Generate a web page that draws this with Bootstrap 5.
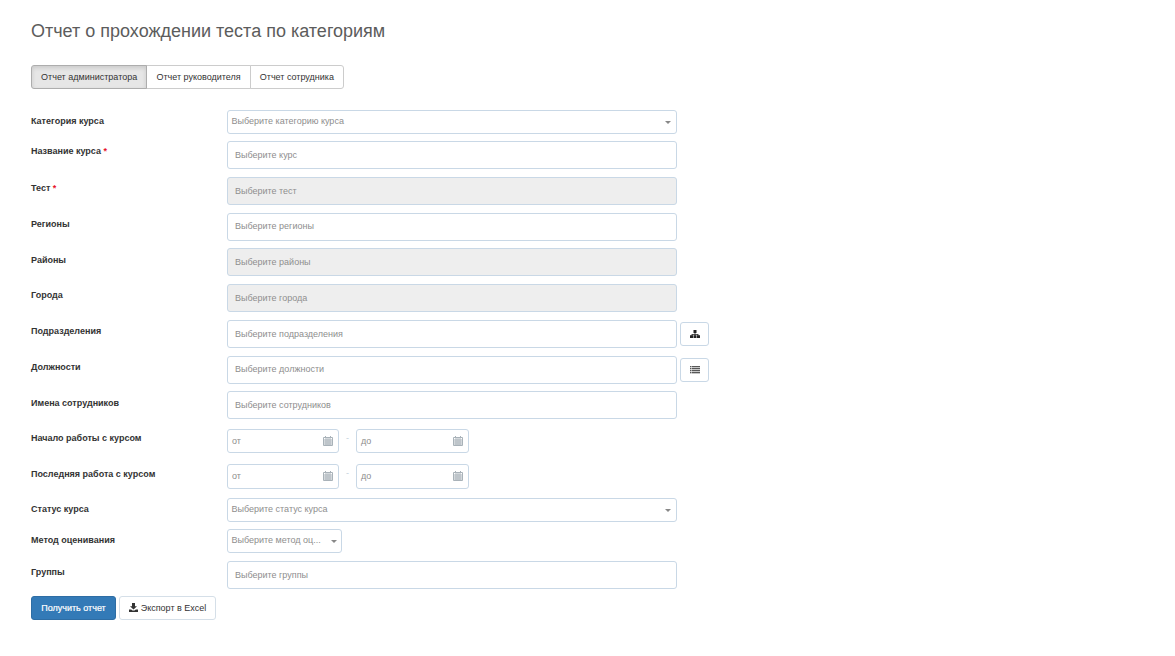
<!DOCTYPE html>
<html lang="ru"><head><meta charset="utf-8"><title>Отчет</title>
<link href="https://cdn.jsdelivr.net/npm/bootstrap@5.3.0/dist/css/bootstrap.min.css" rel="stylesheet">
<style>
body{font-family:"Liberation Sans",Arial,sans-serif;font-size:9px;color:#333;background:#fff;}
.page-wrap{padding:21px 31px 0;}
.page-title{font-size:18px;font-weight:400;line-height:20px;color:#5c5c5c;margin:0 0 24px;}
.tab-group .btn{font-size:9px;line-height:14px;padding:4px 9.100px;height:24px;border:1px solid #ccc;color:#333;background:#fff;border-radius:3px;}
.tab-group .btn.active{background:#e6e6e6;border-color:#adadad;box-shadow:inset 0 2px 4px rgba(0,0,0,.125);color:#333;}
.form-area{margin-top:21px;}
.frow{display:flex;align-items:flex-start;margin-bottom:7.75px;}
.frow.after-sel{margin-bottom:7px;}
.frow.after-names{margin-bottom:9.750px;}
.frow.after-d1{margin-bottom:10.750px;}
.frow.after-d2{margin-bottom:9.500px;}
.frow.after-last{margin-bottom:7px;}
.flabel{width:196px;font-weight:700;font-size:9px;line-height:14px;padding-top:3.500px;color:#333;flex:none;}
.flabel.low{padding-top:4.500px;}
.flabel.high{padding-top:2.500px;}
.flabel.d1{padding-top:1.500px;}
.flabel.d2{padding-top:2.500px;}
.req{color:#e7132a;}
.ctrl{width:450px;height:28px;border:1px solid #c9d8e6;border-radius:3px;background:#fff;font-size:9px;color:#8e8e8e;padding:1px 7px 0;display:flex;align-items:center;}
.ctrl.off{background:#eee;}
.sel{height:24px;padding:0 3.500px;justify-content:space-between;}
.sel::after{content:"";border-style:solid;border-width:3px 3px 0;border-color:#888 transparent transparent;margin-right:1.500px;flex:none;}
.sel-sm{width:115px;}
.sel-sm::after{margin-right:.5px;}
.sel-sm span{white-space:nowrap;}
.side-btn{width:29px;height:24px;margin:2.500px 0 0 3px;border:1px solid #c9d8e6;border-radius:3px;background:#fff;display:flex;align-items:center;justify-content:center;padding:0;}
.date-box{width:112px;height:24.400px;border:1px solid #c9d8e6;border-radius:3px;font-size:9px;color:#8e8e8e;padding:1px 5px 0 4px;display:flex;align-items:center;justify-content:space-between;}
.date-box svg{margin-top:-1px;}
.date-box.wide{width:112.700px;}
.date-sep{width:17px;text-align:center;color:#c3d0dc;line-height:18px;}
.act-row{gap:3px;}
.act-btn{height:24px;font-size:9px;line-height:14px;border-radius:3px;display:flex;align-items:center;}
.act-main{background:#337ab7;border:1px solid #2e6da4;color:#fff;width:85px;justify-content:center;padding:0;-webkit-text-stroke:.2px #fff;}
.act-alt{background:#fff;border:1px solid #d5dfe8;color:#333;width:97px;justify-content:center;padding:0;gap:3px;}
</style></head><body>
<div class="page-wrap">
<h1 class="page-title">Отчет о прохождении теста по категориям</h1>
<div class="btn-group tab-group" role="group">
<button type="button" class="btn active">Отчет администратора</button>
<button type="button" class="btn">Отчет руководителя</button>
<button type="button" class="btn">Отчет сотрудника</button>
</div>
<div class="form-area">
<div class="frow after-sel"><div class="flabel">Категория курса</div><div class="ctrl sel"><span>Выберите категорию курса</span></div></div>
<div class="frow"><div class="flabel high">Название курса <span class="req">*</span></div><div class="ctrl">Выберите курс</div></div>
<div class="frow"><div class="flabel low">Тест <span class="req">*</span></div><div class="ctrl off">Выберите тест</div></div>
<div class="frow"><div class="flabel low">Регионы</div><div class="ctrl">Выберите регионы</div></div>
<div class="frow"><div class="flabel low">Районы</div><div class="ctrl off">Выберите районы</div></div>
<div class="frow"><div class="flabel">Города</div><div class="ctrl off">Выберите города</div></div>
<div class="frow"><div class="flabel low">Подразделения</div><div class="ctrl">Выберите подразделения</div>
<button type="button" class="side-btn" aria-label="Структура"><svg width="10" height="8" viewBox="0 0 10 8"><path fill="#222" d="M3.500 0h3v3h-3zM4.600 3h.8v1H8.400v1.200h-.8V4.800H5.400v.4h-.8v-.4H2.400v.4h-.8V4H4.600zM0 5.200h3V8H0zM3.500 5.200h3V8h-3zM7 5.200h3V8H7z"/></svg></button></div>
<div class="frow"><div class="flabel low">Должности</div><div class="ctrl">Выберите должности</div>
<button type="button" class="side-btn" aria-label="Список"><svg width="10" height="8" viewBox="0 0 10 8"><path fill="#222" d="M0 .25h1.500v1H0zM2 .25H10v1H2zM0 2.250h1.500v1H0zM2 2.250H10v1H2zM0 4.250h1.500v1H0zM2 4.250H10v1H2zM0 6.250h1.500v1H0zM2 6.250H10v1H2z"/></svg></button></div>
<div class="frow after-names"><div class="flabel low">Имена сотрудников</div><div class="ctrl">Выберите сотрудников</div></div>
<div class="frow after-d1"><div class="flabel d1">Начало работы с курсом</div><div class="date-box">от<svg width="10" height="10" viewBox="0 0 10 10"><path fill="none" stroke="#a9b2b9" d="M.5 1.500h9v8h-9zM.5 4h9M.5 6h9M.5 8h9M3 1.500v8M5 1.500v8M7 1.500v8M2.500 0v2M7.500 0v2"/></svg></div><div class="date-sep">-</div><div class="date-box wide">до<svg width="10" height="10" viewBox="0 0 10 10"><path fill="none" stroke="#a9b2b9" d="M.5 1.500h9v8h-9zM.5 4h9M.5 6h9M.5 8h9M3 1.500v8M5 1.500v8M7 1.500v8M2.500 0v2M7.500 0v2"/></svg></div></div>
<div class="frow after-d2"><div class="flabel d2">Последняя работа с курсом</div><div class="date-box">от<svg width="10" height="10" viewBox="0 0 10 10"><path fill="none" stroke="#a9b2b9" d="M.5 1.500h9v8h-9zM.5 4h9M.5 6h9M.5 8h9M3 1.500v8M5 1.500v8M7 1.500v8M2.500 0v2M7.500 0v2"/></svg></div><div class="date-sep">-</div><div class="date-box wide">до<svg width="10" height="10" viewBox="0 0 10 10"><path fill="none" stroke="#a9b2b9" d="M.5 1.500h9v8h-9zM.5 4h9M.5 6h9M.5 8h9M3 1.500v8M5 1.500v8M7 1.500v8M2.500 0v2M7.500 0v2"/></svg></div></div>
<div class="frow after-sel"><div class="flabel">Статус курса</div><div class="ctrl sel"><span>Выберите статус курса</span></div></div>
<div class="frow"><div class="flabel">Метод оценивания</div><div class="ctrl sel sel-sm"><span>Выберите метод оц...</span></div></div>
<div class="frow after-last"><div class="flabel low">Группы</div><div class="ctrl">Выберите группы</div></div>
<div class="d-flex act-row">
<button type="button" class="act-btn act-main">Получить отчет</button>
<button type="button" class="act-btn act-alt"><svg width="9" height="9" viewBox="0 0 9 9"><path fill="#333" d="M3 0h3v3.200h2L4.500 6.600 1 3.200h2zM0 6.500h2.200l1.300 1.100h2l1.300-1.100H9V9H0z"/></svg>Экспорт в Excel</button>
</div>
</div>
</div>
</body></html>
